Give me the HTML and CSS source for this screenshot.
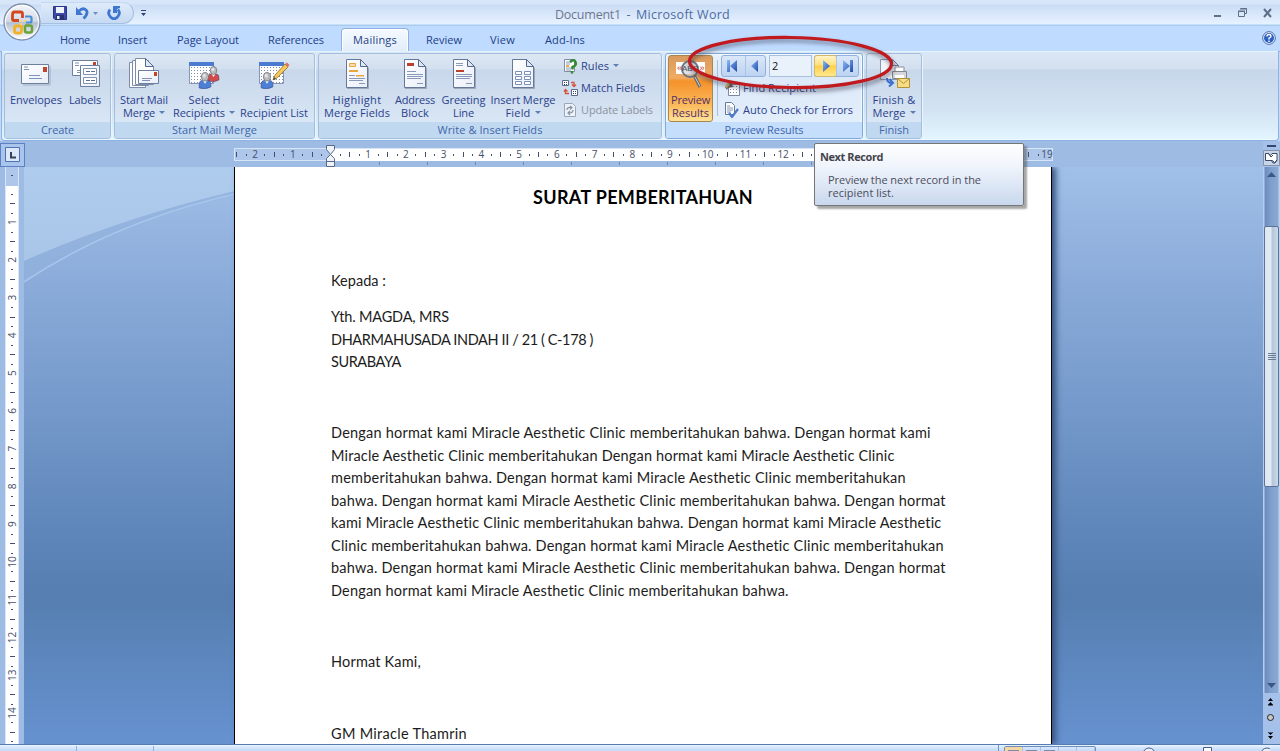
FILE: index.html
```html
<!DOCTYPE html>
<html lang="en">
<head>
<meta charset="utf-8">
<title>Document1 - Microsoft Word</title>
<link rel="stylesheet" href="styles.css">
</head>
<body>
<svg class="defs" width="0" height="0">
  <defs>
    <linearGradient id="orb" x1="0" y1="0" x2="0" y2="1"><stop offset="0" stop-color="#f4f6fa"/><stop offset=".48" stop-color="#d3dae6"/><stop offset=".52" stop-color="#b4bfd2"/><stop offset="1" stop-color="#fff"/></linearGradient>
    <linearGradient id="sheet" x1="0" y1="0" x2="1" y2="1"><stop offset="0" stop-color="#fff"/><stop offset="1" stop-color="#e8eef8"/></linearGradient>
    <linearGradient id="nav" x1="0" y1="0" x2="1" y2="1"><stop offset="0" stop-color="#8dbcf8"/><stop offset="1" stop-color="#1f48ab"/></linearGradient>
    <pattern id="grid" width="3" height="3" patternUnits="userSpaceOnUse"><rect width="3" height="3" fill="#fff"/><rect width="1" height="1" fill="#7c8aab"/></pattern>
    <symbol id="page" viewBox="0 0 24 32"><path d="M1.5 1.5h14l7 7v21h-21z" fill="url(#sheet)" stroke="#65789a"/><path d="M15.5 1.5v7h7z" fill="#dfe8f5" stroke="#55698d"/><path d="M2 30.500h21.500v-21" fill="none" stroke="#7d8797" opacity=".6"/></symbol>
    <symbol id="person" viewBox="0 0 12 16"><path d="M.5 15v-3q0-4 3-4h5q3 0 3 4v2q-5 3-11 1z" fill="currentColor" stroke="#33477c" stroke-width=".5"/><path d="M4 8l2 3 2-3z" fill="#fff"/><ellipse cx="6" cy="4.500" rx="3.300" ry="4" fill="#b8b9bd" stroke="#6b6c73" stroke-width=".7"/><ellipse cx="5.300" cy="3.500" rx="1.500" ry="1.800" fill="#e4e4e6"/></symbol>
  </defs>
</svg>

<header class="titlebar">
  <svg class="orb" width="40" height="40" viewBox="0 0 40 40">
    <circle cx="20" cy="20" r="18" fill="url(#orb)" stroke="#7d8fae" stroke-width="1.300"/>
    <circle cx="20" cy="20" r="16.600" fill="none" stroke="#fff" stroke-width="1.200" opacity=".8"/>
    <g fill="none" stroke-width="2.800">
      <path d="M17 18.500h-5q-1.500 0-1.500-1.500v-4q0-3 2-3h6q2 0 2 2v4" stroke="#d3481c"/>
      <path d="M23 14.500h5q1.500 0 1.500 1.500v3q0 1.500-1.500 1.500h-4" stroke="#4a8ed2" stroke-width="2.200"/>
      <path d="M19.500 23v6q0 2-2 2h-3q-2 0-2-2v-3q0-2 2-2h4" stroke="#efb22a"/>
      <path d="M23 23.500h5q2 0 2 2v3q0 2-2 2h-3q-2 0-2-2v-5" stroke="#6aa338" stroke-width="2.500"/>
    </g>
    <path d="M18 18h2v2h-2zM22 18h2v2h-2zM18 21h2v2h-2z" fill="#f4d37c"/>
  </svg>
  <div class="qat">
    <svg width="14" height="14" viewBox="0 0 14 14"><path d="M.5.500h13v13H2l-1.500-1.500z" fill="#3d48a8" stroke="#2b3384"/><path d="M3 1h8v6H3z" fill="#eef3fc"/><path d="M3 9h8v5H3z" fill="#28316f"/><path d="M4 10h2.500v3H4z" fill="#e8ecf6"/></svg>
    <svg class="undo" width="14" height="14" viewBox="0 0 14 14"><path d="M4 5q4-4 7-1t-2.500 8.500" fill="none" stroke="#3f76cf" stroke-width="2.800"/><path d="M1 1v8h7z" fill="#3f76cf"/></svg>
    <svg class="qdrop" width="5" height="3" viewBox="0 0 5 3"><path d="M0 0h5L2.500 3z" fill="#6c8fc4"/></svg>
    <svg width="14" height="14" viewBox="0 0 14 14"><path d="M3 3.500q-3 4 .5 7.500t7 0T11 3.500" fill="none" stroke="#3f76cf" stroke-width="2.800"/><path d="M6 0h7v2l-3 1v4H6z" fill="#3f76cf"/></svg>
  </div>
  <svg class="qmore" width="5" height="7" viewBox="0 0 5 7"><path d="M0 0h5v1H0zM0 3h5L2.500 6z" fill="#2d4777"/></svg>
  <div class="title"><span class="doc" data-w="66">Document1</span><span class="dash">-</span><span class="app" data-w="94">Microsoft Word</span></div>
  <div class="winbtns">
    <svg width="60" height="14" viewBox="0 0 60 14"><path d="M2 9h7v2H2z" fill="#5f6f88"/><path d="M28.500 2.500h6v5h-2M26.500 5.500h6v5h-6zM26 5h7M28 3h7" fill="none" stroke="#5f6f88"/><path d="M52 3l7 8M59 3l-7 8" stroke="#5f6f88" stroke-width="2"/></svg>
  </div>
</header>

<nav class="tabs">
  <span class="tab t-home"><b data-w="30">Home</b></span>
  <span class="tab t-insert"><b data-w="29">Insert</b></span>
  <span class="tab t-layout"><b data-w="62">Page Layout</b></span>
  <span class="tab t-refs"><b data-w="56">References</b></span>
  <span class="tab t-mail active"><b data-w="44">Mailings</b></span>
  <span class="tab t-review"><b data-w="36">Review</b></span>
  <span class="tab t-view"><b data-w="25">View</b></span>
  <span class="tab t-add"><b data-w="40">Add-Ins</b></span>
  <svg class="help" width="14" height="14" viewBox="0 0 14 14"><circle cx="7" cy="7" r="6.300" fill="#fff" stroke="#3f62a8"/><circle cx="7" cy="7" r="5" fill="#2c5fc4"/><path d="M5 5.500q0-2 2-2t2 1.700q0 1-2 2V8.500M7 9.500v1.500" fill="none" stroke="#fff" stroke-width="1.400"/></svg>
</nav>

<section class="ribbon">
  <div class="group g-create">
    <div class="body">
      <div class="big w62"><svg width="32" height="32" viewBox="0 0 32 32"><path d="M3 27h27V8" fill="none" stroke="#8a93a5" opacity=".6"/><path d="M1.500 6.500h27v19h-27z" fill="url(#sheet)" stroke="#6c7f9f"/><path d="M23 9h4v5h-4z" fill="#c3432b"/><path d="M4 9h4M4 11.500h5M9 17.500h11M9 20.500h13" stroke="#7f93b8"/></svg><b data-w="52">Envelopes</b></div>
      <div class="big w36"><svg width="32" height="32" viewBox="0 0 32 32"><path d="M3.500 2.500h25v15h-25z" fill="#fff" stroke="#6c7f9f"/><path d="M24 4h3v4h-3z" fill="#c3432b"/><path d="M6 5h4M6 7.500h4M8 12.500h6M8 14.500h4" stroke="#7f93b8"/><path d="M11.500 7.500h19v21h-19z" fill="url(#sheet)" stroke="#6c7f9f"/><path d="M14.500 10.500h13v6h-13zM14.500 19.500h13v6h-13z" fill="#fff" stroke="#8394b3"/><path d="M17 13.500h4M22 13.500h4M17 22.500h4M22 22.500h4" stroke="#5a6e98"/></svg><b data-w="32">Labels</b></div>
    </div>
    <div class="cap"><b data-w="33">Create</b></div>
  </div>

  <div class="group g-start">
    <div class="body">
      <div class="big w58"><svg width="32" height="32" viewBox="0 0 32 32"><path d="M1.500 4.500h16v25h-16z" fill="#fff" stroke="#7c8da9"/><path d="M4.500 2.500h16v25h-16z" fill="#fff" stroke="#7c8da9"/><path d="M7.500.500h10l8 8v18h-18z" fill="#fff" stroke="#7c8da9"/><path d="M17.500.500v8h8z" fill="#dfe8f5" stroke="#55698d"/><path d="M10.500 12.500h20v13h-20z" fill="url(#sheet)" stroke="#6c7f9f"/><path d="M26 14h3v4h-3z" fill="#c3432b"/><path d="M14 20.500h10M14 22.500h8" stroke="#7f93b8"/></svg><b data-w="48">Start Mail</b><b><i data-w="32">Merge</i><u></u></b></div>
      <div class="big w62"><svg width="32" height="32" viewBox="0 0 32 32"><path d="M1.500 4.500h24v21h-24z" fill="url(#grid)" stroke="#8796b4"/><path d="M1 4h25v4H1z" fill="#4a7bd0"/><svg x="19" y="8" width="13" height="16" color="#d34a4a"><use href="#person"/></svg><svg x="10" y="14" width="14" height="17" color="#4d7fd6"><use href="#person"/></svg></svg><b data-w="31">Select</b><b><i data-w="52">Recipients</i><u></u></b></div>
      <div class="big w78"><svg width="32" height="32" viewBox="0 0 32 32"><path d="M1.500 4.500h24v21h-24z" fill="url(#grid)" stroke="#8796b4"/><path d="M1 4h25v4H1z" fill="#4a7bd0"/><path d="M15 22l2-5L27 6l3 3-11 11z" fill="#f3c75a" stroke="#94702b" stroke-width=".8"/><path d="M27 6l2-1.500 2.500 2.500L30 9z" fill="#d9746a"/><path d="M15 22l1-3 2 2z" fill="#444"/><svg x="2" y="14" width="14" height="17" color="#4d7fd6"><use href="#person"/></svg></svg><b data-w="20">Edit</b><b data-w="68">Recipient List</b></div>
    </div>
    <div class="cap"><b data-w="85">Start Mail Merge</b></div>
  </div>

  <div class="group g-write">
    <div class="body">
      <div class="big w76"><svg width="24" height="32"><use href="#page"/><path d="M4.500 5.500h6v3h-6z" fill="#f7ddb0" stroke="#eda53a"/><path d="M4 12h9v2H4zM11 17h8v1.500h-8z" fill="#eda53a"/><path d="M4 17.500h6M4 20.500h16M4 22.500h14M14 25.500h6" stroke="#8a99b8"/></svg><b data-w="49">Highlight</b><b data-w="66">Merge Fields</b></div>
      <div class="big w40"><svg width="24" height="32"><use href="#page"/><path d="M4 5h7v3H4z" fill="#b8402c"/><path d="M4 13.500h9M4 16.500h16M4 18.500h16M4 20.500h14M14 25.500h6" stroke="#8a99b8"/></svg><b data-w="40">Address</b><b data-w="28">Block</b></div>
      <div class="big w57"><svg width="24" height="32"><use href="#page"/><path d="M4 12h8v2H4z" fill="#b8402c"/><path d="M4 5.500h7M4 7.500h7M4 16.500h16M4 18.500h16M4 20.500h14M14 25.500h6" stroke="#8a99b8"/></svg><b data-w="44">Greeting</b><b data-w="21">Line</b></div>
      <div class="big w62"><svg width="24" height="32"><use href="#page"/><path d="M4.500 13.500h6v3h-6zM13.500 13.500h6v3h-6zM4.500 18.500h6v3h-6zM13.500 18.500h6v3h-6zM4.500 23.500h6v3h-6zM13.500 23.500h6v3h-6z" fill="#fff" stroke="#7b8fb9"/></svg><b data-w="65">Insert Merge</b><b><i data-w="25">Field</i><u></u></b></div>
      <div class="stack">
        <div class="cmd"><svg width="16" height="16" viewBox="0 0 16 16"><path d="M2.500 1.500h10v12h-10z" fill="#fff" stroke="#7d8ca8"/><path d="M4 4h6M4 6h4M4 10h6M4 12h5" stroke="#8a99b8"/><path d="M4 7h3v2H4z" fill="#efb24a"/><path d="M8 4q4-3.500 5.500 0T10.500 9v2.500M10 13v2.500" fill="none" stroke="#2f8a2f" stroke-width="2.400"/></svg><b><i data-w="28">Rules</i><u></u></b></div>
        <div class="cmd"><svg width="16" height="16" viewBox="0 0 16 16"><path d="M.500.500h6v5h-6zM9.500 9.500h6v6h-6z" fill="#fff" stroke="#5a6a8a"/><path d="M2 2h1v1H2zM4 2h1v1H4zM2 4h1v1H2zM4 4h1v1H4zM11 11h1v1h-1zM13 11h1v1h-1zM11 13h1v1h-1zM13 13h1v1h-1z" fill="#33415f"/><path d="M9 2.500h3v3M10 4.500l2 2 2-2M7 13.500H3.500v-3M2 11.500l1.500-2 2 2" fill="none" stroke="#d6533a" stroke-width="1.300"/></svg><b data-w="64">Match Fields</b></div>
        <div class="cmd off"><svg width="16" height="16" viewBox="0 0 16 16"><path d="M2.500 1.500h8l3 3v10h-11z" fill="#eef1f6" stroke="#9aa6bb"/><path d="M5 8q0-3 4-2.500M8 4l2 1.500L8 7.500M11 8q0 3-4 3M8 9l-2 2 2 2" fill="none" stroke="#8793a9" stroke-width="1.200"/></svg><b data-w="72">Update Labels</b></div>
      </div>
    </div>
    <div class="cap"><b data-w="105">Write &amp; Insert Fields</b></div>
  </div>

  <div class="group g-preview">
    <div class="body">
      <div class="big pressed"><svg width="32" height="32" viewBox="0 0 32 32"><path d="M1 4h29v12H1z" fill="#fff"/><circle cx="15" cy="11" r="8" fill="#c9ced6" fill-opacity=".6" stroke="#70757e" stroke-width="2"/><text x="2" y="13" class="abc">«</text><text x="7" y="13" class="abc mid">ABC</text><text x="24.500" y="13" class="abc">»</text><path d="M19.500 18l5.500 11" stroke="#666b73" stroke-width="3.200"/><path d="M20 19l5 9.500" stroke="#cfd3d8"/></svg><b data-w="39">Preview</b><b data-w="37">Results</b></div>
      <div class="sep"></div>
      <div class="pcol">
        <div class="navrow">
          <div class="navbox"><span><svg width="10" height="12" viewBox="0 0 10 12"><path d="M0 0h3v12H0zM10 0v12L3 6z" fill="url(#nav)"/></svg></span><span><svg width="8" height="12" viewBox="0 0 8 12"><path d="M7 0v12L0 6z" fill="url(#nav)"/></svg></span></div>
          <div class="field">2</div>
          <div class="navbox"><span class="hot"><svg width="8" height="12" viewBox="0 0 8 12"><path d="M1 0v12l7-6z" fill="url(#nav)"/></svg></span><span><svg width="10" height="12" viewBox="0 0 10 12"><path d="M7 0h3v12H7zM0 0v12l7-6z" fill="url(#nav)"/></svg></span></div>
        </div>
        <div class="cmd"><svg width="16" height="16" viewBox="0 0 16 16"><path d="M4.500 4.500h11v11h-11z" fill="url(#grid)" stroke="#7b88a5"/><path d="M1 7l4-5 3 1 1 4-5 1-1 2z" fill="#6b625c"/><path d="M1 7l3-4 2 1-3 4z" fill="#d8b35a"/></svg><b data-w="73">Find Recipient</b></div>
        <div class="cmd"><svg width="16" height="16" viewBox="0 0 16 16"><path d="M1.500.500h6l3 3v9h-9z" fill="#fff" stroke="#65789a"/><path d="M3 4h3M3 6h6M3 8h6M3 10h4" stroke="#7f93b8"/><path d="M5 11l3 4 6-8" fill="none" stroke="#4f7cc6" stroke-width="2.200"/></svg><b data-w="110">Auto Check for Errors</b></div>
      </div>
      <svg class="oval" width="220" height="72" viewBox="0 0 220 72"><ellipse cx="109.500" cy="31.500" rx="101" ry="25" transform="rotate(.8 109 31)" fill="none" stroke="#c01a1f" stroke-width="3.200"/></svg>
    </div>
    <div class="cap"><b data-w="79">Preview Results</b></div>
  </div>

  <div class="group g-finish">
    <div class="body">
      <div class="big w54"><svg width="32" height="32" viewBox="0 0 32 32"><path d="M2.500 1.500h12l6 6v14h-18z" fill="#f2f5fa" stroke="#8a99b2"/><path d="M14.500 1.500v6h6z" fill="#cbd5e4" stroke="#66799b"/><path d="M17 9h9v6h-9z" fill="#fff" stroke="#8a8f99"/><path d="M14.500 13.500h14v7h-14z" fill="#d5d7dc" stroke="#82868f"/><path d="M17 17h9v3h-9z" fill="#fff"/><path d="M19.500 20.500h12v9h-12z" fill="#f6dc83" stroke="#b3903c"/><path d="M19.500 20.500l6 5 6-5" fill="none" stroke="#b3903c"/><path d="M9 20q0 5 5 5M11.500 21l3.500 4-4 3.500" fill="none" stroke="#3d6ed0" stroke-width="2"/></svg><b data-w="43">Finish &amp;</b><b><i data-w="33">Merge</i><u></u></b></div>
    </div>
    <div class="cap"><b data-w="30">Finish</b></div>
  </div>
</section>

<main class="work">
  <aside class="left">
    <div class="corner"><svg width="15" height="15" viewBox="0 0 15 15"><path d="M.500.500h14v14H.500z" fill="#dce8f8" stroke="#4f72b5"/><path d="M6 5v5.500h5" fill="none" stroke="#33415f" stroke-width="2"/></svg></div>
    <svg class="vruler" id="vruler" width="24" height="577"></svg>
  </aside>
  <div class="center">
    <svg class="hruler" id="hruler" width="1239" height="26"></svg>
    <div class="canvas">
      <svg class="swoosh" width="211" height="120" viewBox="0 0 211 120" preserveAspectRatio="none"><path d="M0 0h211v24Q100 50 0 94z" fill="#b7d2f0" opacity=".65"/><path d="M211 24Q100 50 0 94v22Q90 56 211 28z" fill="#93b2de" opacity=".6"/><path d="M0 115Q90 55 211 27" fill="none" stroke="#a9c6ec" stroke-width="1.500"/></svg>
      <article class="page">
        <h1><span data-w="220">SURAT PEMBERITAHUAN</span></h1>
        <p class="to"><span data-w="55">Kepada :</span></p>
        <p class="addr"><span data-w="118">Yth. MAGDA, MRS</span><br><span data-w="262">DHARMAHUSADA INDAH II / 21 ( C-178 )</span><br><span data-w="70">SURABAYA</span></p>
        <p class="para"><span data-w="600">Dengan hormat kami Miracle Aesthetic Clinic memberitahukan bahwa. Dengan hormat kami</span><br><span data-w="564">Miracle Aesthetic Clinic memberitahukan Dengan hormat kami Miracle Aesthetic Clinic</span><br><span data-w="575">memberitahukan bahwa. Dengan hormat kami Miracle Aesthetic Clinic memberitahukan</span><br><span data-w="615">bahwa. Dengan hormat kami Miracle Aesthetic Clinic memberitahukan bahwa. Dengan hormat</span><br><span data-w="611">kami Miracle Aesthetic Clinic memberitahukan bahwa. Dengan hormat kami Miracle Aesthetic</span><br><span data-w="613">Clinic memberitahukan bahwa. Dengan hormat kami Miracle Aesthetic Clinic memberitahukan</span><br><span data-w="615">bahwa. Dengan hormat kami Miracle Aesthetic Clinic memberitahukan bahwa. Dengan hormat</span><br><span data-w="458">Dengan hormat kami Miracle Aesthetic Clinic memberitahukan bahwa.</span></p>
        <p class="close"><span data-w="90">Hormat Kami,</span></p>
        <p class="sign"><span data-w="136">GM Miracle Thamrin</span></p>
      </article>
    </div>
    <div class="tip"><strong data-w="63">Next Record</strong><p><span data-w="153">Preview the next record in the</span><br><span data-w="66">recipient list.</span></p></div>
  </div>
  <aside class="scroll">
    <svg width="17" height="26" viewBox="0 0 17 26"><path d="M4 4h9v2H4z" fill="#33466e"/><path d="M.500 9.500h16v15H.500z" fill="#c8d5e8" stroke="#8493ab"/><path d="M2.500 12.500h3l2 2 1.500-2h5v7l-2.500 2-2-2h-7z" fill="#fff" stroke="#3a4866"/><path d="M5 12l3 4 2-2M8 19l2 3h2l2-3" fill="none" stroke="#3a4866"/></svg>
    <div class="track">
      <svg class="up" width="9" height="5" viewBox="0 0 9 5"><path d="M4.500 0L9 5H0z" fill="#3b5688"/></svg>
      <div class="thumb"><i></i><i></i><i></i><i></i></div>
      <svg class="down" width="9" height="5" viewBox="0 0 9 5"><path d="M0 0h9L4.500 5z" fill="#3b5688"/></svg>
    </div>
    <svg width="17" height="51" viewBox="0 0 17 51"><path d="M5 8l2.500-3L10 8zM5 12l2.500-3 2.500 3zM5 11.500h5v1H5zM5 39h5v1H5zM5 39.500L7.500 42 10 39.500zM5 43l2.500 3 2.500-3z" fill="#000"/><circle cx="7.500" cy="24.500" r="3" fill="#c9c9c9" stroke="#222"/></svg>
  </aside>
</main>

<footer class="status">
  <span class="s1"></span><span class="s2"></span><span class="s3"></span>
  <div class="views"><span class="on"></span><span></span><span></span><span></span><span></span></div>
  <svg class="zoomer" width="130" height="7" viewBox="0 0 130 7"><circle cx="9" cy="9" r="6" fill="#e8f0fb" stroke="#44608f"/><path d="M63.500 2.500h8v5h-8z" fill="#fff" stroke="#44608f"/><circle cx="127" cy="9" r="6" fill="#e8f0fb" stroke="#44608f"/></svg>
</footer>
<script src="script.js"></script>
</body>
</html>
```
FILE: styles.css
```css
* { box-sizing: border-box; }
body { margin: 0; width: 1280px; height: 751px; overflow: hidden; display: flex; flex-direction: column; background: #bfdbff; font: 11px/13px "Open Sans", "Noto Sans", sans-serif; color: #2b3f8c; }
b { font-weight: 400; white-space: nowrap; }
i { font-style: normal; }
svg { display: block; flex: none; }
.defs { position: absolute; }
[data-w] { display: inline-block; white-space: nowrap; }

.titlebar { position: relative; z-index: 3; height: 26px; flex: none; display: flex; align-items: flex-start; background: linear-gradient(#d7e6f9 0 4px, #cadcf4 5px, #dbe9fb 16px, #e6f2ff 24px, #a9cbf0 25px); }
.orb { margin: 2px 0 0 2px; }
.qat { display: flex; align-items: center; gap: 7px; height: 22px; margin: 2px 0 0 -1px; padding: 0 14px 0 12px; width: 93px; border: 1px solid #a6c0e4; border-left: 0; border-top-color: #c4d8f1; border-radius: 0 11px 11px 0; background: linear-gradient(#dfebfa, #c6daf3); }
.qat svg:nth-child(2) { margin-left: 1px; }
.qdrop { margin: 0 2px 0 -3px; }
.qmore { margin: 10px 0 0 7px; }
.title { flex: 1; padding: 7px 0 0 409px; font-size: 12.5px; line-height: 15px; color: #4d6ba3; white-space: nowrap; }
.title .doc { color: #6f7690; }
.title .dash { display: inline-block; width: 15px; text-align: center; }
.winbtns { padding: 6px 8px 0 0; }

.tabs { position: relative; height: 26px; flex: none; display: flex; padding-left: 60px; background: #bfdbff; border-bottom: 1px solid #8db2e3; }
.tab { height: 26px; line-height: 28px; text-align: center; color: #234085; }
.t-home { width: 30px; } .t-insert { width: 29px; margin-left: 28px; } .t-layout { width: 62px; margin-left: 30px; }
.t-refs { width: 56px; margin-left: 29px; } .t-mail { width: 68px; margin-left: 17px; } .t-review { width: 36px; margin-left: 17px; }
.t-view { width: 25px; margin-left: 28px; } .t-add { width: 40px; margin-left: 30px; }
.tab.active { height: 24px; margin-top: 2px; line-height: 22px; border: 1px solid #8db2e3; border-bottom: 0; border-radius: 4px 4px 0 0; background: linear-gradient(#f5faff, #e1ecf9); box-shadow: inset 0 0 0 1px #fff; }
.help { margin: 5px 4px 0 auto; }

.ribbon { position: relative; z-index: 2; height: 90px; flex: none; display: flex; gap: 3px; margin: -1px 1px 0 1px; padding: 1px 0 2px 2px; border: 1px solid #8db2e3; border-top-color: transparent; border-radius: 0 0 4px 4px; background: linear-gradient(#dbe7f5, #d3e0f0 17px, #c7d7ea 18px, #d3e3f3 58px, #e2f4fe 86px); box-shadow: inset 0 -1px #eefaff; }
.group { height: 86px; flex: none; display: flex; flex-direction: column; border: 1px solid #a4bfdd; border-radius: 3px; box-shadow: 1px 1px #eaf4fd; background: linear-gradient(#dde8f4, #d2dfee 15px, #c8d7ea 16px, #d8e6f5 68px); }
.g-create { width: 107px; } .g-start { width: 201px; } .g-write { width: 344px; } .g-preview { width: 198px; } .g-finish { width: 56px; }
.body { position: relative; flex: 1; display: flex; }
.g-preview .body { z-index: 1; }
.cap { height: 16px; line-height: 15px; text-align: center; background: #c1d9f0; color: #3f66ab; border-radius: 0 0 2px 2px; }
.big { display: flex; flex-direction: column; align-items: center; padding-top: 4px; }
.big svg { margin-bottom: 3px; }
.big b { display: flex; align-items: center; justify-content: center; height: 13px; flex: none; }
u { width: 0; height: 0; margin-left: 4px; border: 3px solid transparent; border-top: 3px solid #5c7fb8; border-bottom: 0; }
.w36 { width: 36px; } .w40 { width: 40px; } .w54 { width: 54px; } .w57 { width: 57px; } .w58 { width: 58px; } .w62 { width: 62px; } .w76 { width: 76px; } .w78 { width: 78px; }
.stack { margin-left: 8px; padding-top: 1px; }
.cmd { display: flex; align-items: center; height: 22px; gap: 3px; }
.cmd b { display: flex; align-items: center; margin-top: -2px; }
.off { color: #8d93a0; }

.g-preview { background: linear-gradient(#e9f3fd, #dfebf9 16px, #dbe8f8 17px, #e3eefb 68px); border-color: #7fa9d8; box-shadow: inset 0 0 0 1px #f3f9ff, 1px 1px #eaf4fd; }
.g-preview .cap { background: #c5defc; }
.pressed { width: 45px; height: 67px; margin: 1px 0 0 2px; padding-top: 2px; border: 1px solid #a88650; border-radius: 3px; background: linear-gradient(#d99a5f, #f2ab61 22px, #f5922b 25px, #fbb757 48px, #ffe59b 66px); color: #54306a; }
.abc { font: 9px "Liberation Sans", sans-serif; fill: #c23a2b; }
.mid { font-size: 8px; fill: #4b4f5c; }
.sep { width: 1px; height: 56px; margin: 6px 3px 0 4px; background: #a9bfdc; }
.pcol { padding-top: 1px; }
.navrow { display: flex; align-items: center; height: 22px; }
.navbox { display: flex; width: 45px; height: 22px; border: 1px solid #93b1dc; border-radius: 3px; background: linear-gradient(#dbe8f8, #bcd3f1); }
.navbox span { flex: 1; display: flex; align-items: center; justify-content: center; }
.navbox:first-child span:first-child { padding-right: 3px; }
.navbox span + span { border-left: 1px solid #abc4e6; }
.navbox .hot { background: linear-gradient(#fff3c8, #ffe17f 45%, #ffd048 50%, #ffe88d); box-shadow: 0 0 0 1px #d2b76e; border-radius: 2px; }
.field { width: 43px; height: 22px; margin: 0 2px 0 3px; padding: 0 0 0 2px; line-height: 20px; border: 1px solid #a9c0de; background: #e9f1fb; color: #111; }
.pcol .cmd { padding-left: 3px; }
.oval { position: absolute; left: 15px; top: -23px; filter: drop-shadow(1px 3px 2px rgba(40,40,60,.55)); }

.work { flex: none; height: 603px; display: flex; background: #9ebbe3; }
.left { width: 24px; flex: none; }
.corner { width: 25px; height: 24px; margin: 2px 0 0; padding: 3px 0 0 4px; border: 1px solid #5d80c4; background: #a9c5ec; }
.center { position: relative; width: 1239px; flex: none; }
.canvas { position: relative; display: flex; height: 577px; overflow: hidden; background: linear-gradient(#a0c0e9, #93b2de 75px, #86a8d7 140px, #5c84b8 380px, #567eb0 430px, #6692d0 577px); }
.swoosh { position: absolute; left: 0; top: 0; }
.page { position: relative; width: 818px; height: 577px; margin-left: 210px; padding-left: 96px; flex: none; background: #fff; border: solid #000; border-width: 0 1px; box-shadow: 4px 0 6px #3a5480; color: #1c1c1c; font: 14.500px/22.500px Lato, sans-serif; }
.page p { margin: 0; height: 22px; }
.page h1 { margin: 0; padding: 19px 0 0 202px; height: 103px; font: 700 18px/23px Lato, sans-serif; color: #000; }
.page .to { height: 36px; }
.page .addr { height: 116px; }
.page .para { height: 229px; }
.page .close { height: 72px; }
.tip { position: absolute; left: 790px; top: 2px; width: 210px; height: 63px; padding: 6px 5px; border: 1px solid #767676; border-radius: 2px; background: linear-gradient(#fff, #eef3fb 40%, #c9d8ee); box-shadow: 3px 3px 2px rgba(80,80,80,.5); color: #4c4c5c; }
.tip strong { color: #44444c; }
.tip p { margin: 10px 0 0 8px; }
.scroll { width: 17px; flex: none; background: #a5c1ea; }
.track { position: relative; height: 526px; display: flex; flex-direction: column; align-items: center; background: linear-gradient(90deg, #b5cdf0 0 1px, #6d8cbb 2px, #7f9fcc 8px, #8aa8d4 15px, #bcd2f1 16px); }
.up { margin-top: 5px; }
.thumb { width: 15px; height: 261px; margin-top: 49px; display: flex; flex-direction: column; align-items: center; justify-content: center; gap: 1px; border: 1px solid #5c7399; border-radius: 2px; background: linear-gradient(90deg, #dfe7f1, #e3eaf4 45%, #b3c6da 55%, #c9d9ea); }
.thumb i { width: 8px; height: 1px; background: #6b7c96; }
.down { margin: auto 0 5px; }

.status { height: 7px; flex: none; display: flex; overflow: hidden; border-top: 1px solid #567db0; background: linear-gradient(#eaf4ff, #d3e4fa 3px, #c3daf8); }
.status .s1, .status .s2 { width: 77px; border-right: 1px solid #8fb0dc; margin-top: 1px; flex: none; }
.status .s3 { width: 845px; border-right: 1px solid #6f97cd; flex: none; }
.views { display: flex; width: 92px; height: 20px; margin: 1px 0 0 5px; border: 1px solid #6d8fc0; border-radius: 2px; flex: none; }
.views span { flex: 1; border-right: 1px solid #a9c2e5; }
.views span::before { content: ""; display: block; margin: 3px 3px 0; height: 6px; background: #7b8bab; }
.views .on { background: #f5d7a0; }
.views span:nth-child(n+4)::before { background: transparent; }
.zoomer { margin-left: 44px; }
```
FILE: script.js
```js
// Spread each label over its measured width.
document.querySelectorAll('[data-w]').forEach(function (el) {
  var target = parseFloat(el.dataset.w);
  var n = el.textContent.length;
  var gap = (target - el.getBoundingClientRect().width) / n;
  el.style.letterSpacing = gap.toFixed(3) + 'px';
});

var NS = 'http://www.w3.org/2000/svg';
function add(parent, name, attrs, text) {
  var e = document.createElementNS(NS, name);
  for (var k in attrs) e.setAttribute(k, attrs[k]);
  if (text !== undefined) e.textContent = text;
  parent.appendChild(e);
}

// Horizontal ruler: origin at the left margin, one unit per centimetre.
var h = document.getElementById('hruler');
var cm = 37.72, x0 = 306.5, font = '"Open Sans", sans-serif';
add(h, 'rect', { x: 210.5, y: 7.5, width: 818, height: 12, fill: '#adc6ea', stroke: '#d7e5f8' });
add(h, 'rect', { x: 307, y: 8, width: 616, height: 12, fill: '#fff' });
for (var q = -10; q <= 75; q++) {
  var x = x0 + q * cm / 4;
  if (q === 0) continue;
  if (q % 4 === 0) {
    if (q / 4 <= 12) add(h, 'text', { x: x, y: 17, 'text-anchor': 'middle', 'font-size': 10, 'font-family': font, fill: '#44506a' }, Math.abs(q / 4));
  } else if (q % 2 === 0) add(h, 'rect', { x: Math.round(x), y: 11, width: 1, height: 5, fill: '#44506a' });
  else add(h, 'rect', { x: Math.round(x), y: 13, width: 1, height: 2, fill: '#44506a' });
}
add(h, 'text', { x: 1023, y: 17, 'text-anchor': 'middle', 'font-size': 10, 'font-family': font, fill: '#44506a' }, '19');
for (var t = 1; t < 15; t++) add(h, 'rect', { x: Math.round(306.5 + t * 48), y: 21, width: 1, height: 3, fill: '#6f86ac' });
add(h, 'path', { d: 'M302.500 4.500h8v4l-4 5 4 4v3h-8v-3l4-4-4-5zM302.500 20.500h8v5h-8z', fill: '#eef3fa', stroke: '#5a6a86' });

// Vertical ruler.
var v = document.getElementById('vruler');
add(v, 'rect', { x: 5.5, y: -1, width: 13, height: 579, fill: '#fff', stroke: '#d7e5f8' });
add(v, 'rect', { x: 6, y: 0, width: 12, height: 19, fill: '#adc6ea' });
for (var r = -1; r < 60; r++) {
  var y = 17.5 + r * 37.75 / 4;
  if (r === 0) continue;
  if (r % 4 === 0) add(v, 'text', { transform: 'translate(16 ' + y + ') rotate(-90)', 'text-anchor': 'middle', 'font-size': 10, 'font-family': font, fill: '#44506a' }, r / 4);
  else if (r % 2 === 0) add(v, 'rect', { x: 10, y: Math.round(y), width: 5, height: 1, fill: '#44506a' });
  else add(v, 'rect', { x: 11, y: Math.round(y), width: 2, height: 1, fill: '#44506a' });
}
```
